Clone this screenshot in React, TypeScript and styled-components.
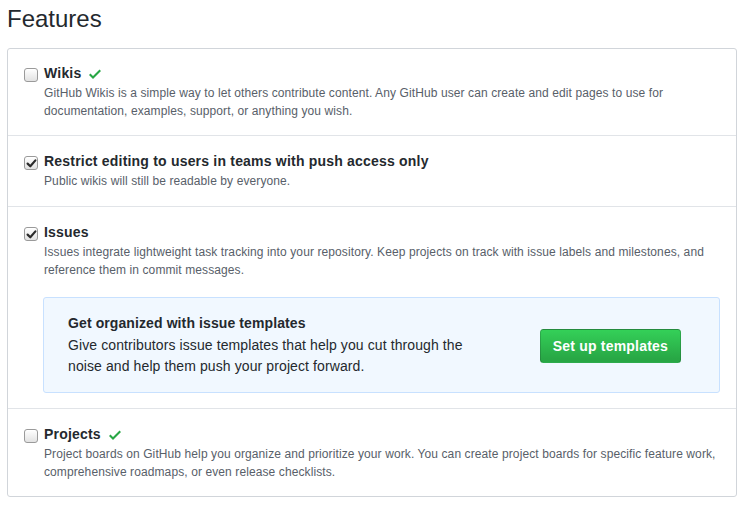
import React from "react";
import styled, { createGlobalStyle } from "styled-components";

const GlobalStyle = createGlobalStyle`
  html, body { margin: 0; padding: 0; background: #fff; }
  body {
    font-family: "Liberation Sans", Arial, Helvetica, sans-serif;
    font-size: 14px;
    line-height: 1.5;
    color: #24292e;
  }
  * { box-sizing: border-box; }
`;

const Page = styled.div`
  padding: 7px 7px 0 7px;
  width: 744px;
`;

const Heading = styled.h2`
  margin: 0 0 17px 0;
  font-size: 24px;
  font-weight: 400;
  line-height: 24px;
  color: #24292e;
`;

const Box = styled.div`
  border: 1px solid #d1d5da;
  border-radius: 3px;
  background: #fff;
`;

const Row = styled.div`
  padding: 0 16px;
  & + & { border-top: 1px solid #e1e4e8; }
`;

const Option = styled.div<{ $top: number; $bottom: number }>`
  display: grid;
  grid-template-columns: 20px 1fr;
  margin: ${(p) => `${p.$top}px 0 ${p.$bottom}px`};
`;

const CheckBox = styled.span`
  display: flex;
  align-items: center;
  justify-content: center;
  width: 14px;
  height: 14px;
  margin-top: 5px;
  border: 1px solid #9a9a9a;
  border-radius: 3px;
  background: linear-gradient(#ffffff, #e2e2e2);
  box-shadow: inset 0 1px 0 rgba(255, 255, 255, 0.8);
`;

const Body = styled.div`
  min-width: 0;
`;

const Title = styled.div`
  display: flex;
  align-items: center;
  font-weight: 700;
  font-size: 14px;
  line-height: 21px;
  letter-spacing: 0.2px;
  color: #24292e;
`;

const GreenCheck = styled.svg`
  margin-left: 8px;
  margin-top: 1px;
  fill: #28a745;
`;

const Note = styled.p`
  margin: 0;
  font-size: 12px;
  line-height: 18px;
  letter-spacing: 0.1px;
  color: #586069;
`;

const Promo = styled.div`
  display: flex;
  align-items: center;
  margin: 18px 0 0 -1px;
  padding: 17px 38px 15px 24px;
  background: #f1f8ff;
  border: 1px solid #c8e1ff;
  border-radius: 3px;
`;

const PromoText = styled.div`
  flex: 0 0 420px;
`;

const PromoTitle = styled.h4`
  margin: 0 0 2px 0;
  font-size: 14px;
  font-weight: 700;
  line-height: 1.25;
  letter-spacing: 0.1px;
  color: #24292e;
`;

const PromoBody = styled.p`
  margin: 0;
  font-size: 14px;
  line-height: 21px;
  letter-spacing: 0.1px;
  color: #24292e;
`;

const GreenButton = styled.button`
  margin-left: auto;
  padding: 6px 12px;
  font-family: inherit;
  font-size: 14px;
  font-weight: 700;
  line-height: 20px;
  letter-spacing: 0.2px;
  color: #fff;
  background-image: linear-gradient(-180deg, #34d058 0%, #28a745 90%);
  border: 1px solid rgba(27, 31, 35, 0.2);
  border-radius: 3.5px;
  white-space: nowrap;
  cursor: pointer;
`;

const Tick = () => (
  <svg width="11" height="11" viewBox="0 0 11 11">
    <path
      d="M1.6 5.6 L4.3 8.3 L9.4 2.4"
      fill="none"
      stroke="#2b2b2b"
      strokeWidth="2.2"
      strokeLinecap="round"
      strokeLinejoin="round"
    />
  </svg>
);

const Enabled = () => (
  <GreenCheck width="12" height="16" viewBox="0 0 12 16" aria-label="enabled">
    <path fillRule="evenodd" d="M12 5l-8 8-4-4 1.5-1.5L4 10l6.5-6.5L12 5z" />
  </GreenCheck>
);

type Feature = {
  title: string;
  note: string;
  checked?: boolean;
  enabled?: boolean;
  promo?: boolean;
  top: number;
  bottom: number;
};

const features: Feature[] = [
  {
    title: "Wikis",
    enabled: true,
    top: 14,
    bottom: 15,
    note:
      "GitHub Wikis is a simple way to let others contribute content. Any GitHub user can create and edit pages to use for documentation, examples, support, or anything you wish.",
  },
  {
    title: "Restrict editing to users in teams with push access only",
    checked: true,
    top: 15,
    bottom: 16,
    note: "Public wikis will still be readable by everyone.",
  },
  {
    title: "Issues",
    checked: true,
    promo: true,
    top: 15,
    bottom: 15,
    note:
      "Issues integrate lightweight task tracking into your repository. Keep projects on track with issue labels and milestones, and reference them in commit messages.",
  },
  {
    title: "Projects",
    enabled: true,
    top: 15,
    bottom: 15,
    note:
      "Project boards on GitHub help you organize and prioritize your work. You can create project boards for specific feature work, comprehensive roadmaps, or even release checklists.",
  },
];

export default function App() {
  return (
    <>
      <GlobalStyle />
      <Page>
        <Heading>Features</Heading>
        <Box>
          {features.map((f) => (
            <Row key={f.title}>
              <Option $top={f.top} $bottom={f.bottom}>
                <CheckBox>{f.checked && <Tick />}</CheckBox>
                <Body>
                  <Title>
                    {f.title}
                    {f.enabled && <Enabled />}
                  </Title>
                  <Note>{f.note}</Note>
                  {f.promo && (
                    <Promo>
                      <PromoText>
                        <PromoTitle>Get organized with issue templates</PromoTitle>
                        <PromoBody>
                          Give contributors issue templates that help you cut through the noise and help them push your
                          project forward.
                        </PromoBody>
                      </PromoText>
                      <GreenButton>Set up templates</GreenButton>
                    </Promo>
                  )}
                </Body>
              </Option>
            </Row>
          ))}
        </Box>
      </Page>
    </>
  );
}
